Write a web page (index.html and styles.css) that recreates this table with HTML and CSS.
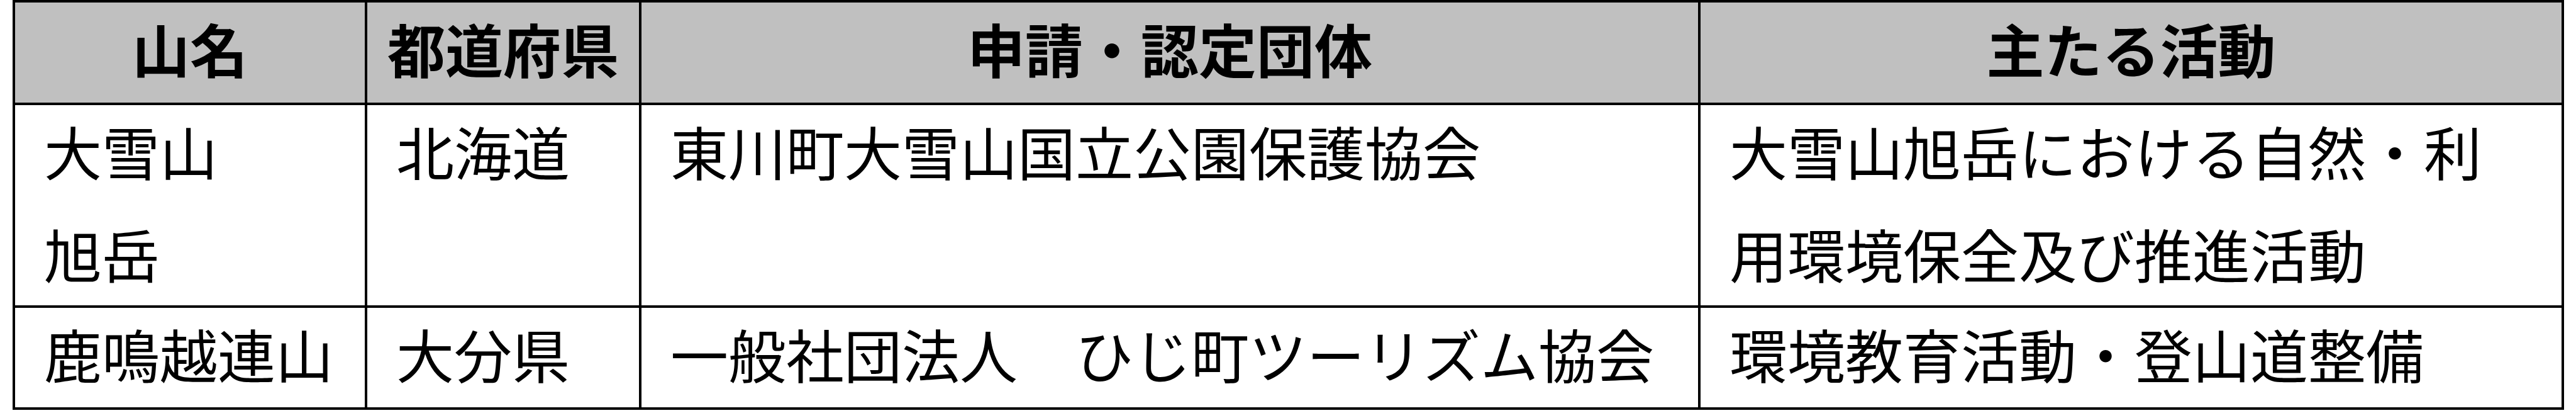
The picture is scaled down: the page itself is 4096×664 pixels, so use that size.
FILE: index.html
```html
<!DOCTYPE html>
<html lang="ja">
<head>
<meta charset="utf-8">
<title>山の認定団体</title>
<link rel="stylesheet" href="styles.css">
</head>
<body>
<div class="sheet" role="table">
  <div class="cell head" role="columnheader">山名</div>
  <div class="cell head" role="columnheader">都道府県</div>
  <div class="cell head" role="columnheader">申請・認定団体</div>
  <div class="cell head" role="columnheader">主たる活動</div>

  <div class="cell" role="cell">大雪山<br>旭岳</div>
  <div class="cell" role="cell">北海道</div>
  <div class="cell" role="cell">東川町大雪山国立公園保護協会</div>
  <div class="cell" role="cell">大雪山旭岳における自然・利<br>用環境保全及び推進活動</div>

  <div class="cell" role="cell">鹿鳴越連山</div>
  <div class="cell" role="cell">大分県</div>
  <div class="cell" role="cell">一般社団法人　ひじ町ツーリズム協会</div>
  <div class="cell" role="cell">環境教育活動・登山道整備</div>
</div>
</body>
</html>
```

FILE: styles.css
```css
html, body {
  margin: 0;
  padding: 0;
  background: #ffffff;
}

body {
  font-family: "Liberation Serif", "Noto Sans CJK JP", serif;
  color: #000000;
}

.sheet {
  margin-left: 20px;
  width: 4057px;
  box-sizing: border-box;
  display: grid;
  grid-template-columns: 556px 432px 1680px 1369px;
  grid-template-rows: 159px 318px 158px;
  gap: 4px;
  border: 4px solid #000000;
  background: #000000;
}

.cell {
  min-height: 0;
  overflow: visible;
  background: #ffffff;
  padding-left: 46px;
  font-family: "Liberation Serif", "Noto Sans CJK JP", serif;
  font-size: 92px;
  line-height: 163px;
  font-weight: 400;
  white-space: nowrap;
}

.cell.head {
  background: #c0c0c0;
  padding-left: 0;
  text-align: center;
  line-height: 162px;
  font-weight: 700;
}
```
